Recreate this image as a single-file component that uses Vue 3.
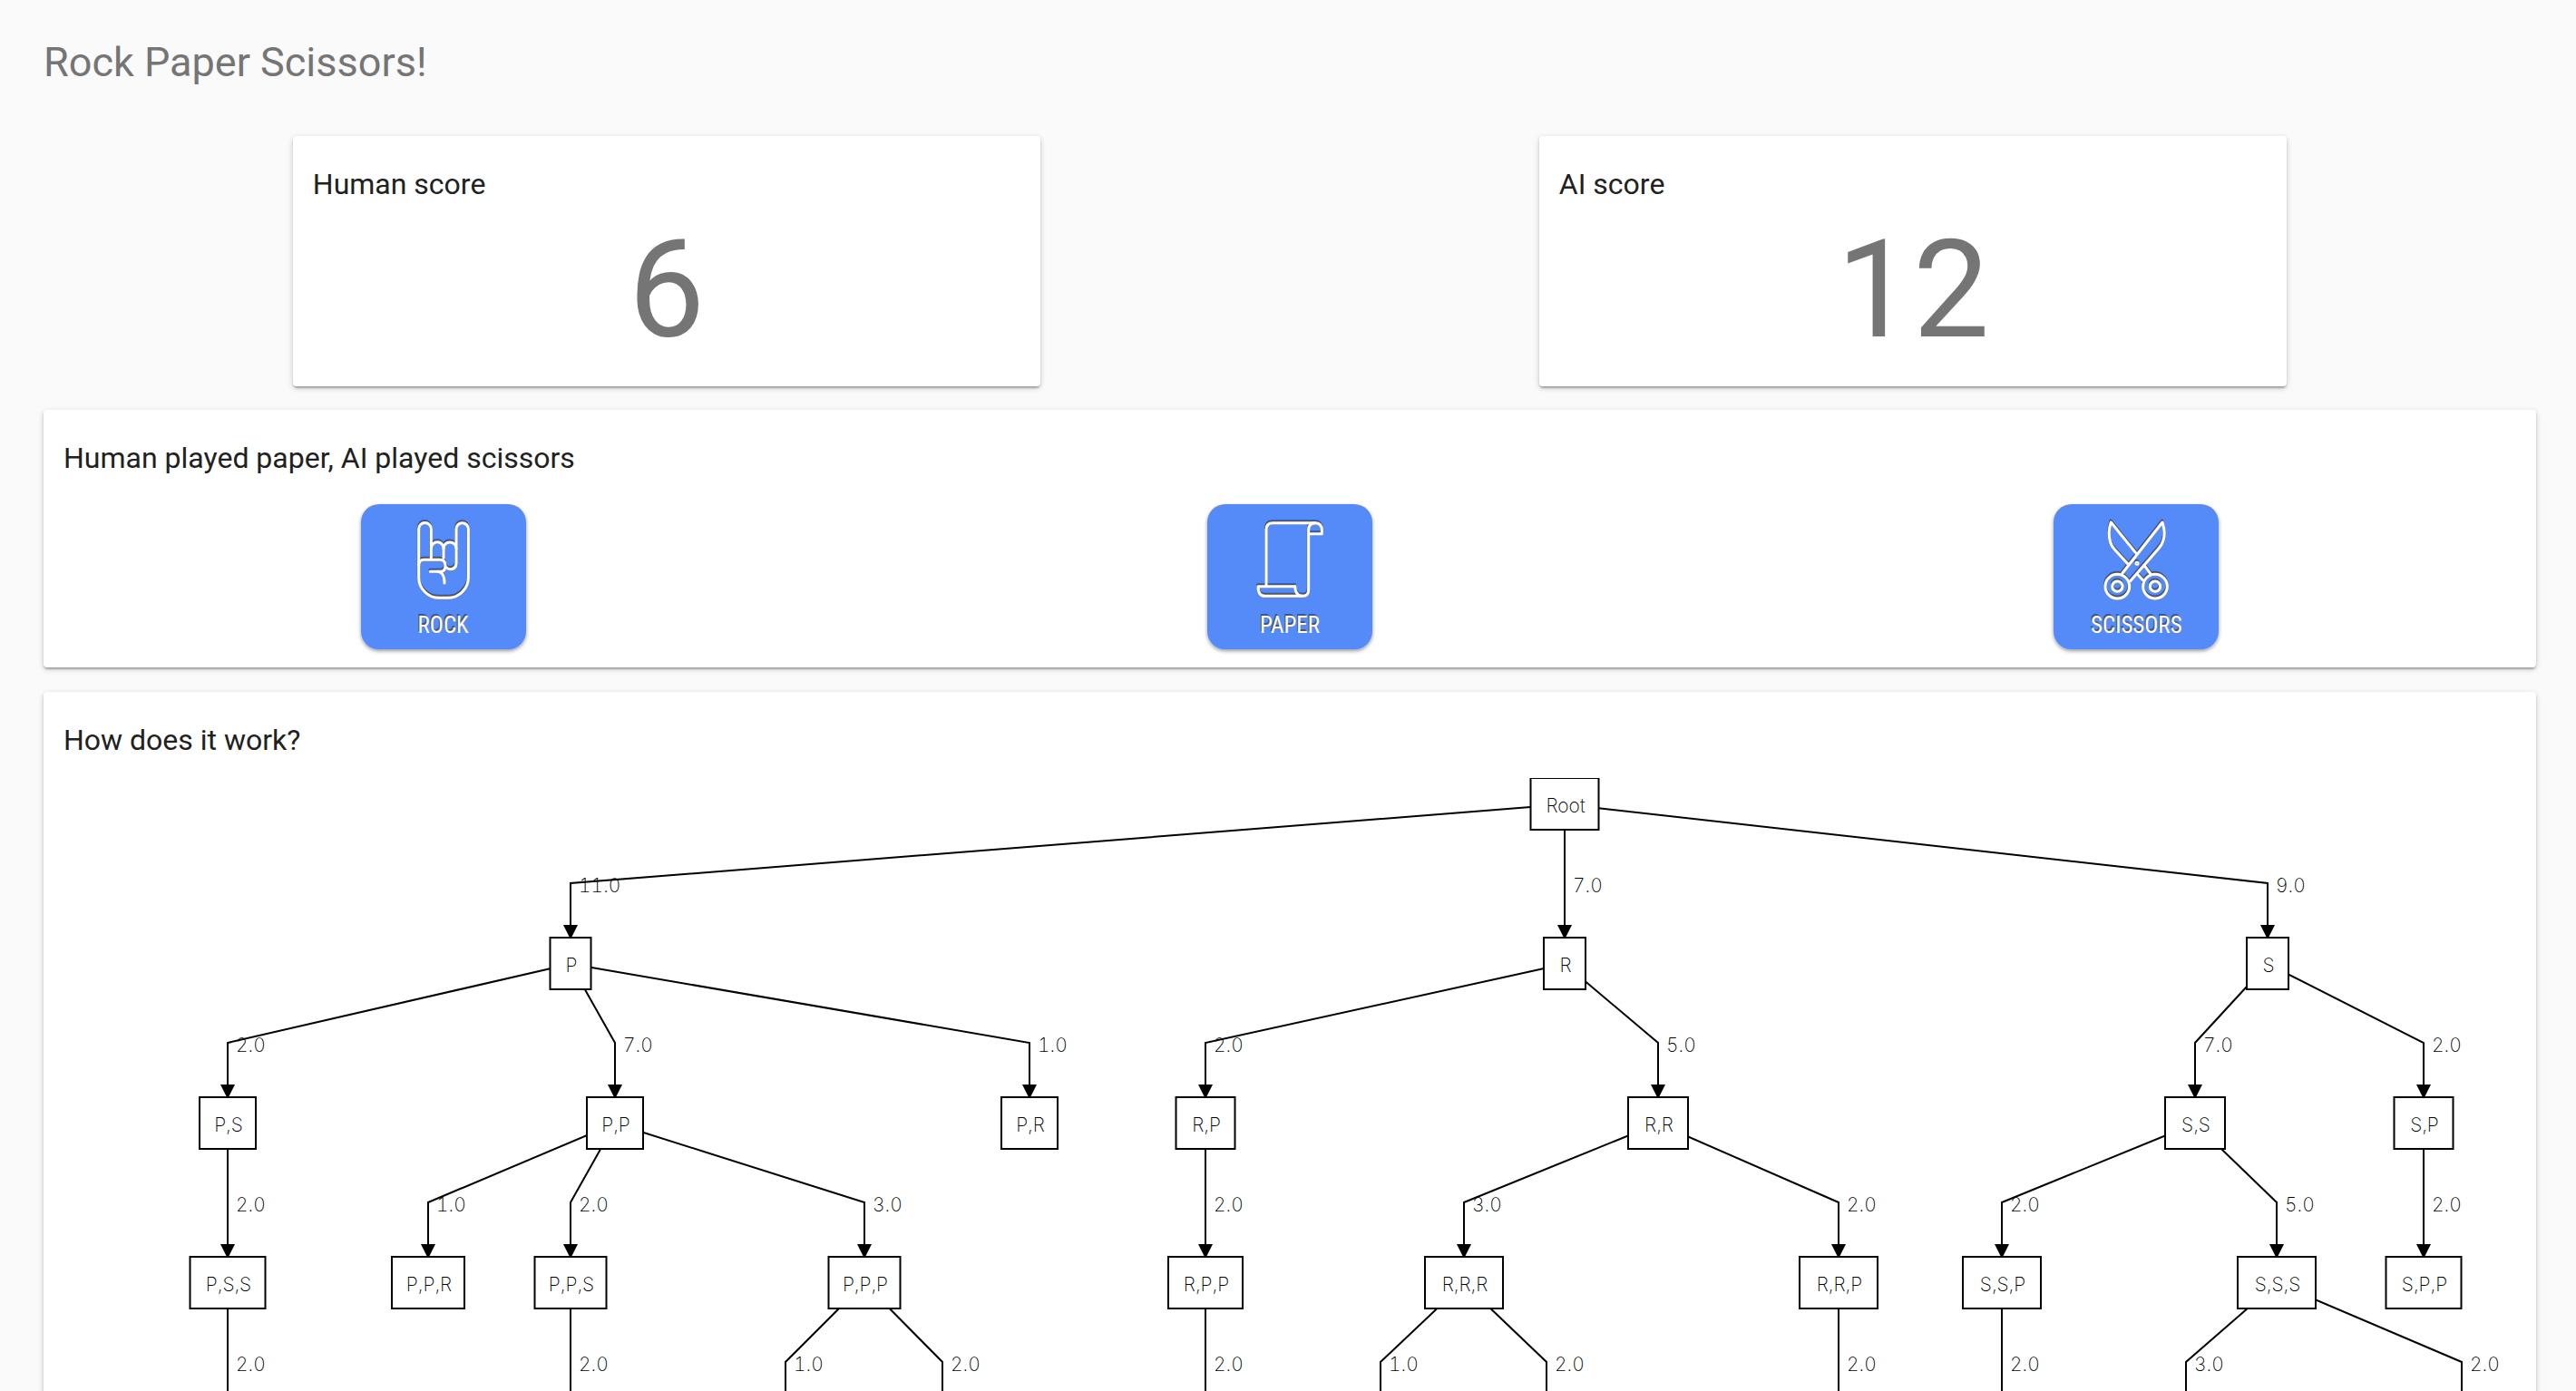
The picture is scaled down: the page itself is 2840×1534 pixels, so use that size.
<script setup>
import { ref, computed } from 'vue'

const human = ref(6)
const ai = ref(12)

const moves = [
  {
    name: 'ROCK',
    viewBox: '207 96 240 288',
    paths: [
      'M286 228 V130 a20 20 0 0 0 -41 0 V290 a68 68 0 0 0 68 68 h28 a68 68 0 0 0 68 -68 V130 a20 20 0 0 0 -40 0 V243 q0 20 -20 20 q-8 0 -11 -5',
      'M286 194 a20 20 0 0 1 41 0 V226',
      'M327 194 a21 20 0 0 1 42 0',
      'M245 250 q0 -18 18 -18 h52 q18 0 18 20 q0 19 -16 19 h-34',
      'M308 271 q22 2 22 38'
    ],
    circles: []
  },
  {
    name: 'PAPER',
    viewBox: '216 96 240 288',
    paths: [
      'M258 318 V132 q0 -22 22 -22 h140 q22 0 22 24 v12 h-38',
      'M353 320 H231 q0 32 24 32 h122 q21 0 21 -20 V134 q0 -24 22 -24',
      'M353 320 q2 32 24 32'
    ],
    circles: []
  },
  {
    name: 'SCISSORS',
    viewBox: '225 96 240 288',
    paths: [
      'M346 212 L262 108 q-12 34 -2 66 q4 14 14 24 l44 48',
      'M300 276 L432 108 q12 36 2 62 q-4 14 -14 24 L326 302',
      'M372 250 l22 30',
      'M348 278 l18 20'
    ],
    circles: [
      { x: 283, y: 320, r: 40 },
      { x: 283, y: 320, r: 17 },
      { x: 408, y: 320, r: 40 },
      { x: 408, y: 320, r: 17 },
      { x: 348, y: 244, r: 3 }
    ]
  }
]

// Each node: centre x, level in the tree, box width, label, parent id and edge weight
const nodes = [
  { id: 'Root', x: 1677, level: 0, w: 75 },
  { id: 'P', x: 581, level: 1, w: 45, parent: 'Root', weight: '11.0' },
  { id: 'R', x: 1677, level: 1, w: 46, parent: 'Root', weight: '7.0' },
  { id: 'S', x: 2452, level: 1, w: 46, parent: 'Root', weight: '9.0' },
  { id: 'P,S', x: 203, level: 2, w: 62, parent: 'P', weight: '2.0' },
  { id: 'P,P', x: 630, level: 2, w: 62, parent: 'P', weight: '7.0' },
  { id: 'P,R', x: 1087, level: 2, w: 62, parent: 'P', weight: '1.0' },
  { id: 'R,P', x: 1281, level: 2, w: 65, parent: 'R', weight: '2.0' },
  { id: 'R,R', x: 1780, level: 2, w: 66, parent: 'R', weight: '5.0' },
  { id: 'S,S', x: 2372, level: 2, w: 66, parent: 'S', weight: '7.0' },
  { id: 'S,P', x: 2624, level: 2, w: 65, parent: 'S', weight: '2.0' },
  { id: 'P,S,S', x: 203, level: 3, w: 83, parent: 'P,S', weight: '2.0' },
  { id: 'P,P,R', x: 424, level: 3, w: 80, parent: 'P,P', weight: '1.0' },
  { id: 'P,P,S', x: 581, level: 3, w: 79, parent: 'P,P', weight: '2.0' },
  { id: 'P,P,P', x: 905, level: 3, w: 79, parent: 'P,P', weight: '3.0' },
  { id: 'R,P,P', x: 1281, level: 3, w: 82, parent: 'R,P', weight: '2.0' },
  { id: 'R,R,R', x: 1566, level: 3, w: 86, parent: 'R,R', weight: '3.0' },
  { id: 'R,R,P', x: 1979, level: 3, w: 86, parent: 'R,R', weight: '2.0' },
  { id: 'S,S,P', x: 2159, level: 3, w: 86, parent: 'S,S', weight: '2.0' },
  { id: 'S,S,S', x: 2462, level: 3, w: 86, parent: 'S,S', weight: '5.0' },
  { id: 'S,P,P', x: 2624, level: 3, w: 83, parent: 'S,P', weight: '2.0' }
]

// Branches that run on below the last drawn level
const openEnds = [
  { x: 203, parent: 'P,S,S', weight: '2.0' },
  { x: 581, parent: 'P,P,S', weight: '2.0' },
  { x: 818, parent: 'P,P,P', weight: '1.0' },
  { x: 991, parent: 'P,P,P', weight: '2.0' },
  { x: 1281, parent: 'R,P,P', weight: '2.0' },
  { x: 1474, parent: 'R,R,R', weight: '1.0' },
  { x: 1657, parent: 'R,R,R', weight: '2.0' },
  { x: 1979, parent: 'R,R,P', weight: '2.0' },
  { x: 2159, parent: 'S,S,P', weight: '2.0' },
  { x: 2362, parent: 'S,S,S', weight: '3.0' },
  { x: 2666, parent: 'S,S,S', weight: '2.0' }
].map((n) => ({ ...n, level: 4 }))

const BOX = 57
const top = (n) => n.level * 176
const byId = Object.fromEntries(nodes.map((n) => [n.id, n]))

const edges = computed(() =>
  [...nodes, ...openEnds]
    .filter((n) => n.parent)
    .map((n) => {
      const p = byId[n.parent]
      const y = top(n)
      return {
        id: `${n.parent}-${n.x}`,
        line: `${p.x},${top(p) + 29} ${n.x},${y - 60} ${n.x},${y - 8}`,
        head: `${n.x - 8},${y - 14} ${n.x + 8},${y - 14} ${n.x},${y + 2}`,
        x: n.x + 9,
        y: y - 50,
        weight: n.weight
      }
    })
)
</script>

<template>
  <main class="page">
    <h1>Rock Paper Scissors!</h1>

    <div class="scores">
      <section class="card score">
        <h2>Human score</h2>
        <p>{{ human }}</p>
      </section>
      <section class="card score">
        <h2>AI score</h2>
        <p>{{ ai }}</p>
      </section>
    </div>

    <section class="card">
      <h2>Human played paper, AI played scissors</h2>
      <div class="moves">
        <button v-for="m in moves" :key="m.name" type="button" class="move">
          <svg class="icon" :viewBox="m.viewBox" aria-hidden="true">
            <g v-for="layer in ['shade', 'line']" :key="layer" :class="layer">
              <path v-for="d in m.paths" :key="d" :d="d" />
              <circle v-for="(c, i) in m.circles" :key="i" :cx="c.x" :cy="c.y" :r="c.r" />
            </g>
          </svg>
          <span>{{ m.name }}</span>
        </button>
      </div>
    </section>

    <section class="card">
      <h2>How does it work?</h2>
      <svg class="tree" viewBox="0 0 2748 720" role="img" aria-label="Move history tree">
        <g v-for="e in edges" :key="e.id">
          <polyline class="edge" :points="e.line" />
          <polygon :points="e.head" />
          <text :x="e.x" :y="e.y">{{ e.weight }}</text>
        </g>
        <g v-for="n in nodes" :key="n.id">
          <rect class="box" :x="n.x - n.w / 2" :y="top(n)" :width="n.w" :height="BOX" />
          <text class="name" :x="n.x + 1" :y="top(n) + 38">{{ n.id }}</text>
        </g>
      </svg>
    </section>
  </main>
</template>

<style>
body {
  margin: 0;
  background: #fafafa;
}
</style>

<style scoped>
.page {
  box-sizing: border-box;
  height: 100vh;
  overflow: hidden;
  padding: 45px 44px 0 48px;
  font-family: Roboto, sans-serif;
  color: #212121;
}
h1 {
  margin: 0 0 57px;
  font-size: 45px;
  line-height: 48px;
  font-weight: 400;
  color: #757575;
}
h2 {
  margin: 0;
  padding: 32px 22px 0;
  font-size: 32px;
  line-height: 42px;
  font-weight: 400;
}
.scores {
  display: flex;
  justify-content: space-around;
}
.card {
  margin-bottom: 27px;
  background: #fff;
  border-radius: 4px;
  box-shadow: 0 2px 6px rgba(0, 0, 0, 0.2), 0 2px 2px rgba(0, 0, 0, 0.14),
    0 4px 2px -2px rgba(0, 0, 0, 0.12);
}
.score {
  box-sizing: border-box;
  width: 30%;
  margin-bottom: 26px;
  padding-bottom: 18px;
}
.score p {
  margin: 8px 0 0;
  font-size: 150px;
  line-height: 176px;
  text-align: center;
  color: #757575;
}
.moves {
  display: grid;
  grid-template-columns: repeat(3, 1fr);
  justify-items: center;
  margin: 0 -26px;
  padding: 30px 0 20px;
}
.move {
  display: flex;
  flex-direction: column;
  align-items: center;
  width: 182px;
  height: 160px;
  padding: 16px 0 0;
  border: 0;
  border-radius: 20px;
  background: #548bf8;
  box-shadow: 0 2px 4px rgba(0, 0, 0, 0.4);
  font: 25px/32px "Roboto Condensed", "Liberation Sans Narrow", Roboto, sans-serif;
  color: #fff;
  text-shadow: -1px -2px 0 #555;
  cursor: pointer;
}
.icon {
  width: 80px;
  height: 96px;
  margin-bottom: 6px;
  fill: none;
  stroke-width: 9;
  stroke-linecap: round;
  stroke-linejoin: round;
}
.shade {
  stroke: #555;
  transform: translate(-1px, -6px);
}
.line {
  stroke: #fff;
}
.tree {
  display: block;
  width: 100%;
  margin-top: 21px;
}
.tree text {
  font: 200 21px Inter, "Liberation Sans", sans-serif;
  font-variant-numeric: tabular-nums;
}
.tree .name {
  text-anchor: middle;
}
.edge {
  fill: none;
  stroke: #000;
  stroke-width: 2;
}
.box {
  fill: #fff;
  stroke: #000;
  stroke-width: 2;
}
</style>
